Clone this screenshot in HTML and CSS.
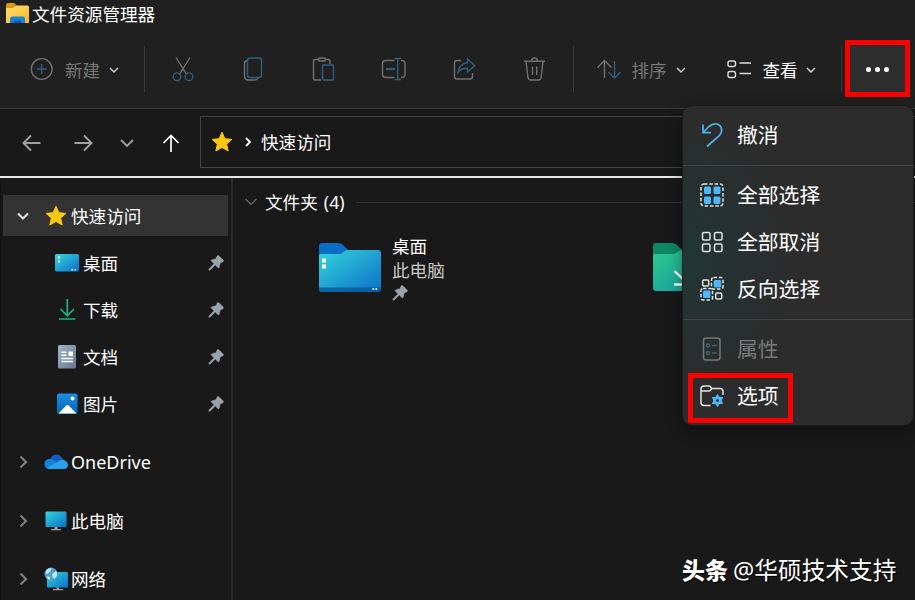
FILE: index.html
```html
<!DOCTYPE html>
<html lang="zh-CN">
	<head>
		<meta charset="UTF-8">
		<title>文件资源管理器</title>
		<link rel="stylesheet" href="styles.css">
	</head>
	<body>
		<svg class="defs" width="0" height="0">
			<defs>
				<linearGradient id="g-blue" x1="0" y1="0" x2="1" y2="1">
					<stop offset="0" stop-color="#35d5dc"/>
					<stop offset="1" stop-color="#0b6fc8"/>
				</linearGradient>
				<linearGradient id="g-green" x1="0" y1="0" x2="0.6" y2="1">
					<stop offset="0" stop-color="#30c88b"/>
					<stop offset="1" stop-color="#17a5a0"/>
				</linearGradient>
				<linearGradient id="g-yellow" x1="0" y1="0" x2="1" y2="1">
					<stop offset="0" stop-color="#ffdc6c"/>
					<stop offset="1" stop-color="#f7b92c"/>
				</linearGradient>
				<linearGradient id="g-doc" x1="0" y1="0" x2="1" y2="1">
					<stop offset="0" stop-color="#a5b4c6"/>
					<stop offset="1" stop-color="#64788f"/>
				</linearGradient>
				<linearGradient id="g-pic" x1="0" y1="0" x2="0" y2="1">
					<stop offset="0" stop-color="#1a8fe0"/>
					<stop offset="1" stop-color="#0a62b5"/>
				</linearGradient>
			</defs>
			<symbol id="chevron" viewBox="0 0 16 16"><path d="M4 6l4 4 4-4"/></symbol>
			<symbol id="star" viewBox="0 0 22 22"><path d="M11 1.2l2.9 6.5 7 .7-5.3 4.7 1.6 6.9-6.2-3.6L4.800 20l1.600-6.900L1.100 8.400l7-.7z" fill="#ffc90e" stroke="#ffc90e" stroke-width="1" stroke-linejoin="round"/></symbol>
			<symbol id="pin" viewBox="0 0 16 16"><path d="M9.300 .8q.9-.7 1.700 .1l4.200 4.200q.8 .9-.2 1.600l-2.700 1.300-1.200 4.500q-.4 .8-1.100 .2L7.300 10l-5 4.900-1.500 .4 .3-1.500L6 8.800 3.300 6.100q-.7-.8 .2-1.200l4.400-1.200z" fill="#9aa3ab" stroke="#9aa3ab" stroke-width=".5"/></symbol>
		</svg>

		<div class="window">
			<header class="titlebar">
				<svg class="app-ico" width="26" height="22" viewBox="0 0 26 22">
					<path d="M1 3q0-2 2-2h6l3 2.500h-2v4H1z" fill="#d99a10"/>
					<path d="M1 6h7l3-2.500h11.500q1.500 0 1.500 1.500v16H1z" fill="url(#g-yellow)"/>
					<path d="M5 21v-4q0-2.500 2.500-2.500h10q2.500 0 2.500 2.500v4z" fill="#1583d6"/>
					<path d="M9 21v-1.500q0-1 1-1h5q1 0 1 1V21z" fill="#0b5ca6"/>
				</svg>
				<h1>文件资源管理器</h1>
			</header>

			<div class="toolbar">
				<div class="tool new">
					<svg width="28" height="28" viewBox="0 0 28 28"><circle cx="13.700" cy="14" r="10.400"/><path class="b" d="M13.700 9v10M8.700 14h10"/></svg>
					<span>新建</span>
					<svg class="chev" width="16" height="16"><use href="#chevron"/></svg>
				</div>
				<i class="line"></i>
				<div class="icons">
					<svg width="28" height="28" viewBox="0 0 28 28"><path d="M7 2.500l10.600 17M21 2.500L10.400 19.500"/><circle class="b" cx="8" cy="21.700" r="3.800"/><circle class="b" cx="20" cy="21.700" r="3.800"/></svg>
					<svg width="28" height="28" viewBox="0 0 28 28"><path d="M8 5.500q-2.500 .5-2.500 3V21q0 4 4 4h6.500q2 0 3-2"/><rect class="b" x="8.500" y="3" width="14" height="19.500" rx="2.500"/></svg>
					<svg width="28" height="28" viewBox="0 0 28 28"><path d="M8.500 4.500H5q-1.500 0-1.500 1.500v17.500Q3.500 25 5 25h6M15.500 4.500H18q2 0 2 2v2.500"/><rect x="8.500" y="3" width="7" height="3" rx="1.500"/><rect class="b" x="12.500" y="10" width="11" height="15" rx="1.200"/></svg>
					<svg width="28" height="28" viewBox="0 0 28 28"><path d="M14.500 5.500H5.500q-3 0-3 3v11q0 3 3 3h9M21 5.500q4 0 4 3v11q0 3-4 3"/><path class="b" d="M17.700 3.500v21M14.500 3.500h6.500M14.500 24.500h6.500"/><path class="b thick" d="M6 14h9"/></svg>
					<svg width="28" height="28" viewBox="0 0 28 28"><path d="M11 5.500H7q-2.500 0-2.500 2.500v13.500Q4.500 24 7 24h13q2.500 0 2.500-2.500V18"/><path class="b" d="M17.500 4l7.300 6.700-7.300 6.300v-3.700q-6-.2-9.500 4.200 1-8.500 9.500-9.700z"/></svg>
					<svg width="28" height="28" viewBox="0 0 28 28"><path d="M4 6.300h21M11.500 6q0-3 3-3t3 3M6 6.500l2 16q.3 2.500 2.500 2.500h8q2.200 0 2.500-2.500l2-16M12.500 11.500v8.500M16.700 11.500v8.500"/></svg>
				</div>
				<i class="line"></i>
				<div class="tool sort">
					<svg width="28" height="28" viewBox="0 0 28 28"><path d="M9.500 23V6M2.500 12.500l7-7 7 7"/><path class="b" d="M19.500 6v17M13.500 17l6 6 6-6"/></svg>
					<span>排序</span>
					<svg class="chev" width="16" height="16"><use href="#chevron"/></svg>
				</div>
				<div class="tool view">
					<svg width="28" height="28" viewBox="0 0 28 28"><rect x="3" y="6" width="7.500" height="5.500" rx="2"/><rect x="3" y="16.500" width="7.500" height="6" rx="2"/><path d="M14.500 8h11.500M14.500 18.500h11.500"/></svg>
					<span>查看</span>
					<svg class="chev" width="16" height="16"><use href="#chevron"/></svg>
				</div>
				<i class="line"></i>
				<div class="more">
					<i></i><i></i><i></i>
				</div>
			</div>

			<nav class="navbar">
				<div class="arrows">
					<svg width="24" height="24" viewBox="0 0 24 24"><path d="M20.500 12H3.500M11 4.500L3.500 12l7.500 7.500"/></svg>
					<svg width="24" height="24" viewBox="0 0 24 24"><path d="M3.500 12h17M13 4.500l7.500 7.500-7.500 7.500"/></svg>
					<svg width="24" height="24" viewBox="0 0 24 24"><path d="M6 9l6 6 6-6"/></svg>
					<svg class="up" width="24" height="24" viewBox="0 0 24 24"><path d="M12 21V4.500M4.500 12L12 4.500l7.500 7.500"/></svg>
				</div>
				<div class="address">
					<svg width="22" height="22"><use href="#star"/></svg>
					<svg class="sep" width="10" height="12" viewBox="0 0 10 12"><path d="M3 2l4 4-4 4"/></svg>
					<span>快速访问</span>
				</div>
			</nav>

			<div class="main">
				<aside class="sidebar">
					<ul>
						<li class="row check">
							<svg class="fold open" width="16" height="16" viewBox="0 0 16 16"><path d="M3 5.500l5 5 5-5"/></svg>
							<svg class="ico" width="22" height="22"><use href="#star"/></svg>
							<span>快速访问</span>
						</li>
						<li class="row sub">
							<svg class="ico" width="26" height="26" viewBox="0 0 26 26"><rect x="1" y="4" width="24" height="17.500" rx="1.500" fill="url(#g-blue)"/><path d="M4 6.500h2v2H4zM4 10.500h2v2H4zM17.500 19h1.500v1.500h-1.500zM20.500 19h1.500v1.500h-1.500z" fill="#fff"/></svg>
							<span>桌面</span>
							<svg class="pin" width="16" height="16"><use href="#pin"/></svg>
						</li>
						<li class="row sub">
							<svg class="ico" width="26" height="26" viewBox="0 0 26 26"><path d="M13.300 2v16.500M6.500 12l6.800 6.800L20 12M5 22h16.500" fill="none" stroke="#19b486" stroke-width="1.700"/></svg>
							<span>下载</span>
							<svg class="pin" width="16" height="16"><use href="#pin"/></svg>
						</li>
						<li class="row sub">
							<svg class="ico" width="26" height="26" viewBox="0 0 26 26"><rect x="4" y="1" width="18" height="23.500" rx="1.500" fill="url(#g-doc)"/><path d="M7.500 8.200h5M7.500 11.200h5M7.500 14.500h11.500M7.500 17.500h11.500" stroke="#fff" stroke-width="1.500"/><path d="M14.500 7.500H19V12h-4.500z" fill="#fff"/></svg>
							<span>文档</span>
							<svg class="pin" width="16" height="16"><use href="#pin"/></svg>
						</li>
						<li class="row sub">
							<svg class="ico" width="26" height="26" viewBox="0 0 26 26"><rect x="3" y="2.500" width="20.500" height="20.500" rx="2" fill="url(#g-pic)"/><path d="M4.500 22.500l8-8.200q1-.8 2 0l8 8.200z" fill="#fff"/><circle cx="18.500" cy="7.500" r="2" fill="#fff"/></svg>
							<span>图片</span>
							<svg class="pin" width="16" height="16"><use href="#pin"/></svg>
						</li>
					</ul>
					<ul class="drives">
						<li class="row">
							<svg class="fold" width="16" height="16" viewBox="0 0 16 16"><path d="M5.500 2.500L11 8l-5.500 5.500"/></svg>
							<svg class="ico" width="24" height="24" viewBox="0 0 24 24"><path d="M5.500 11.500Q7 4.500 12.500 4.500q4.500 0 6.500 5.500l-6 5-8 3z" fill="#0d5fbe"/><path d="M6 19q-5.500 0-5.500-5t5.500-5q3 0 5 2l8 8z" fill="#1583da"/><path d="M3 18l10-6q5-3.500 8-1.500 3 1.500 3 4.300 0 4.200-4.500 4.200H6q-2 0-3-1z" fill="#27a1ee"/></svg>
							<span class="latin">OneDrive</span>
						</li>
						<li class="row">
							<svg class="fold" width="16" height="16" viewBox="0 0 16 16"><path d="M5.500 2.500L11 8l-5.500 5.500"/></svg>
							<svg class="ico" width="24" height="24" viewBox="0 0 24 24"><rect x="1.500" y="2.500" width="21" height="15.500" rx="1" fill="url(#g-blue)"/><path d="M10.500 18h3v2.500h-3zM7 20h10v1.300H7z" fill="#9aa3ab"/></svg>
							<span>此电脑</span>
						</li>
						<li class="row">
							<svg class="fold" width="16" height="16" viewBox="0 0 16 16"><path d="M5.500 2.500L11 8l-5.500 5.500"/></svg>
							<svg class="ico" width="24" height="24" viewBox="0 0 24 24"><rect x="3" y="5" width="21" height="15.500" rx="1" fill="url(#g-blue)"/><path d="M12.500 20.500h2.500v2h-2.500zM9 22h10v1.200H9z" fill="#9aa3ab"/><circle cx="7" cy="7" r="6.500" fill="#4ba3cd"/><path d="M2 4q2-3.500 5.500-3l-1 3-2.500 2.500-2.500 .5zM8 7l4-3q1.500 2 1 4.500L10.500 12 8.500 10zM3 9l3 1v3q-3-1-3-4z" fill="#c7e5ef"/></svg>
							<span>网络</span>
						</li>
					</ul>
				</aside>

				<section class="content">
					<div class="group">
						<svg width="16" height="16" viewBox="0 0 16 16"><path d="M2.500 5l5.500 5.500L13.500 5"/></svg>
						<span>文件夹 (4)</span>
						<i></i>
					</div>
					<div class="folders">
						<div class="folder">
							<svg width="62" height="50" viewBox="0 0 62 50">
								<path d="M0 3q0-3 3-3h16q3 0 5 2l5 5-6 7H0z" fill="#0a6dca"/>
								<path d="M0 13q0-2 2-2h18q2 0 3.500-1.300L26 8q1-1 3-1h30q3 0 3 3v36q0 3-3 3H3q-3 0-3-3z" fill="url(#g-blue)"/>
								<path d="M0 44.500h62V46q0 3-3 3H3q-3 0-3-3z" fill="#075690" opacity=".75"/>
								<path d="M3 15.500h4v4H3zM3 21.500h4v4H3zM53.500 45h1.700v1.700h-1.700zM56.500 45h1.700v1.700h-1.700z" fill="#fff"/>
							</svg>
							<div class="info">
								<p>桌面</p>
								<p class="place">此电脑</p>
								<svg width="16" height="16"><use href="#pin"/></svg>
							</div>
						</div>
						<div class="folder">
							<svg width="62" height="50" viewBox="0 0 62 50">
								<path d="M0 3q0-3 3-3h16q3 0 5 2l5 5-6 7H0z" fill="#0d8a61"/>
								<path d="M0 13q0-2 2-2h18q2 0 3.500-1.300L26 8q1-1 3-1h30q3 0 3 3v35q0 3-3 3H3q-3 0-3-3z" fill="url(#g-green)"/>
								<path d="M31 22v14M21.500 28l9.500 9 9.500-9M21 41.500h20" fill="none" stroke="#fff" stroke-width="2.400"/>
							</svg>
						</div>
					</div>
				</section>
			</div>

			<!-- overflow menu of the ... button -->
			<div class="menu">
				<div class="item">
					<svg width="28" height="28" viewBox="0 0 28 28"><path class="l" d="M5 3.500v8.200h8M5.500 11L11 5.500q4-3.500 8-2.500 5.500 2 4.500 7.500-.5 2.500-2.500 4.500L9 25.500"/></svg>
					<span>撤消</span>
				</div>
				<hr>
				<div class="item">
					<svg width="28" height="28" viewBox="0 0 28 28"><rect class="dash" x="3" y="3" width="22" height="22" rx="3"/><path class="f" d="M7.500 5.500h4q1.500 0 1.500 1.500v4.500q0 1.500-1.500 1.500h-4Q6 13 6 11.500V7q0-1.500 1.500-1.500zM17 5.500h4q1.500 0 1.500 1.500v4.500q0 1.500-1.500 1.500h-4q-1.500 0-1.500-1.500V7q0-1.500 1.500-1.500zM7.500 15.500h4q1.500 0 1.500 1.500v4.500q0 1.500-1.500 1.500h-4Q6 23 6 21.500V17q0-1.500 1.500-1.500zM17 15.500h4q1.500 0 1.500 1.500v4.500q0 1.500-1.500 1.500h-4q-1.500 0-1.500-1.500V17q0-1.500 1.500-1.500z"/></svg>
					<span>全部选择</span>
				</div>
				<div class="item">
					<svg width="28" height="28" viewBox="0 0 28 28"><rect x="4.500" y="4.500" width="7.500" height="7.500" rx="1.500"/><rect x="16.500" y="4.500" width="7.500" height="7.500" rx="1.500"/><rect x="4.500" y="16" width="7.500" height="7.500" rx="1.500"/><rect x="16.500" y="16" width="7.500" height="7.500" rx="1.500"/></svg>
					<span>全部取消</span>
				</div>
				<div class="item">
					<svg width="28" height="28" viewBox="0 0 28 28"><rect x="4.700" y="5" width="6" height="6" rx="1.200"/><rect x="17.700" y="18" width="6" height="6" rx="1.200"/><rect class="dash" x="13.500" y="2.500" width="11.500" height="11.500" rx="2"/><rect class="dash" x="3" y="13.500" width="11.500" height="11.500" rx="2"/><rect class="f" x="15.700" y="5" width="7.500" height="7.500" rx="1.500"/><rect class="f" x="5" y="15.500" width="7.500" height="7.500" rx="1.500"/></svg>
					<span>反向选择</span>
				</div>
				<hr>
				<div class="item off">
					<svg width="28" height="28" viewBox="0 0 28 28"><rect x="5.500" y="3" width="16.500" height="22" rx="2.500"/><g class="props"><circle cx="10" cy="10.500" r="1.600"/><circle cx="10" cy="18" r="1.600"/><path d="M14 10.500h5M14 18h5"/></g></svg>
					<span>属性</span>
				</div>
				<div class="item">
					<svg width="28" height="28" viewBox="0 0 28 28"><path d="M12.500 23.500H6q-3 0-3-3V7q0-3 3-3h4.500q1.500 0 2.200 1l1 1.500H22q3 0 3 3v3.500M3 9h7.500q1.500 0 2.200-1l1-1.500"/><path class="f" d="M19.500 11.800l2 3.200 3.800-.1-1.700 3.600 1.700 3.600-3.800-.1-2 3.200-2-3.200-3.800 .1 1.700-3.600-1.700-3.600 3.800 .1z"/><circle cx="19.500" cy="18.500" r="1.500" fill="#2c2c2c" stroke="none"/></svg>
					<span>选项</span>
				</div>
				<i class="mark"></i>
			</div>

			<div class="watermark"><b>头条</b><span>@华硕技术支持</span></div>
		</div>
	</body>
</html>
```
FILE: styles.css
```css
body{
	margin: 0;
	background: #191919;
	font-family: "Noto Sans", "Noto Sans CJK SC", sans-serif;
	font-size: 17.6px;
	line-height: 24px;
	color: #fff;
}
ul,p,h1{
	padding: 0;
	margin: 0;
	list-style: none;
}
svg{
	flex: none;
	display: block;
}
.defs{
	position: absolute;
}
.window{
	width: 915px;
	height: 600px;
	overflow: hidden;
	position: relative;
}
.titlebar{
	height: 30px;
	box-sizing: border-box;
	padding: 0 0 2px 5px;
	display: flex;
	align-items: center;
	background: #202020;
}
.titlebar .app-ico{
	margin: -2px 1px 0 0;
}
.titlebar h1{
	font-size: 17.6px;
	font-weight: normal;
}

/* toolbar */
.toolbar{
	height: 78px;
	padding-left: 28px;
	display: flex;
	align-items: center;
	background: #202020;
	border-bottom: 1px solid #3b3b3b;
}
.toolbar svg{
	fill: none;
	stroke: #707070;
	stroke-width: 1.4;
}
.toolbar svg .b{
	stroke: #2f5f7d;
}
.toolbar svg .thick{
	stroke-width: 2.4;
}
.toolbar svg.chev{
	margin-top: 1px;
	stroke: #d0d0d0;
}
.toolbar .line{
	width: 1px;
	height: 46px;
	background: #383838;
}
.tool{
	display: flex;
	align-items: center;
	color: #777;
}
.tool span{
	width: 36px;
	margin: 2px 5px 0 9px;
}
.tool.new{
	margin-right: 22px;
}
.tool.sort{
	margin: 0 36px 0 21px;
}
.tool.sort span{
	margin: 2px 6px 0 8px;
}
.tool.view{
	margin-right: 22px;
	color: #fff;
}
.tool.view svg{
	stroke: #ddd;
}
.icons{
	margin: 0 25px 0 24px;
	display: flex;
	gap: 42.3px;
}
.more{
	width: 55px;
	height: 47px;
	margin: 0 0 2px 3px;
	display: flex;
	align-items: center;
	justify-content: center;
	gap: 4px;
	border: 5px solid #fa0000;
	background: #2d2d2d;
}
.more i{
	width: 5px;
	height: 5px;
	margin-top: 2px;
	border-radius: 50%;
	background: #fff;
}

/* navigation */
.navbar{
	height: 67px;
	display: flex;
	align-items: center;
	border-bottom: 2px solid #e9e9e9;
}
.arrows{
	width: 200px;
	box-sizing: border-box;
	padding-left: 20px;
	display: flex;
}
.arrows svg{
	margin-right: 20px;
	fill: none;
	stroke: #a0a0a0;
	stroke-width: 1.9;
}
.arrows svg:first-child{
	margin-right: 27px;
}
.arrows svg.up{
	stroke: #fff;
	stroke-width: 1.7;
}
.address{
	flex: 1;
	height: 50px;
	margin-bottom: 2px;
	padding-left: 10px;
	display: flex;
	align-items: center;
	border: 1px solid #444;
	border-right: 0;
}
.address .sep{
	margin: 0 8px 0 10px;
	fill: none;
	stroke: #fff;
	stroke-width: 1.8;
}

.main{
	height: 422px;
	display: flex;
}
.sidebar{
	flex: none;
	width: 225px;
	padding: 14px 3px 0 2px;
	border-left: 1px solid #131313;
	border-right: 2px solid #2c2c2c;
}
.row{
	height: 47px;
	display: flex;
	align-items: center;
}
.row.check{
	height: 41px;
	margin: 3px 0;
	background: #333;
}
.row .fold{
	width: 16px;
	margin: 0 13px 0 12px;
	fill: none;
	stroke: #7d7d7d;
	stroke-width: 2.2;
}
.row .fold.open{
	stroke: #ddd;
}
.row .ico{
	margin-right: 3px;
}
.row.check .ico{
	margin: 0 4px 0 1px;
}
.row.sub{
	padding-left: 51px;
}
.row.sub .ico{
	margin-right: 3px;
}
.row .pin{
	margin: 0 4px 0 auto;
}
.row .latin{
	font-size: 18px;
}
.drives{
	padding-top: 6px;
}
.drives .row{
	height: 58.500px;
}

.content{
	flex: 1;
	min-width: 0;
}
.group{
	height: 24px;
	margin-top: 12px;
	padding-left: 10px;
	display: flex;
	align-items: center;
}
.group span{
	word-spacing: 1.5px;
}
.group svg{
	margin-right: 6px;
	fill: none;
	stroke: #6a6a6a;
	stroke-width: 1.2;
}
.group i{
	flex: 1;
	height: 1px;
	margin: 1px 0 0 12px;
	background: #333;
}
.folders{
	padding: 20px 0 0 86px;
	display: flex;
}
.folder{
	width: 334px;
	flex: none;
	display: flex;
}
.folder > svg{
	margin-top: 9px;
}
.info{
	padding-left: 11px;
}
.info .place{
	color: #c8c8c8;
}
.info svg{
	margin-top: 3px;
}

/* menu */
.menu{
	width: 230px;
	height: 319px;
	box-sizing: border-box;
	padding-top: 5px;
	position: absolute;
	left: 683px;
	top: 106px;
	border-radius: 9px;
	background: radial-gradient(ellipse 110px 130px at 0 47%, #203634, #2c2c2c);
	box-shadow: 0 0 0 1px #1b1b1b, 0 5px 16px rgba(0,0,0,.45);
}
.menu .item{
	height: 47px;
	padding-left: 14.5px;
	display: flex;
	align-items: center;
	gap: 11.5px;
	font-size: 20.8px;
}
.menu hr{
	height: 1px;
	margin: 7px 0 5px;
	border: 0;
	background: #414444;
}
.menu svg{
	fill: none;
	stroke: #e2e2e2;
	stroke-width: 1.5;
}
.menu svg .l{
	stroke: #4cb5f0;
	stroke-width: 1.7;
}
.menu svg .f{
	fill: #4cb8fa;
	stroke: none;
}
.menu svg .dash{
	stroke-dasharray: 3.500 1.800;
}
.menu .off{
	color: #7a7a7a;
}
.menu .off svg{
	stroke: #777;
}
.menu .off .props{
	stroke: #35627d;
}
.menu .mark{
	width: 95px;
	height: 40px;
	position: absolute;
	left: 5px;
	top: 267px;
	border: 5px solid #fa0000;
}

.watermark{
	position: absolute;
	left: 682px;
	top: 555px;
	font-size: 23px;
	line-height: 30px;
	white-space: nowrap;
	text-shadow: 1px 1px 1px #000;
}
.watermark b{
	font-weight: 900;
}
.watermark span{
	margin-left: 5px;
	font-size: 23.7px;
}
```
